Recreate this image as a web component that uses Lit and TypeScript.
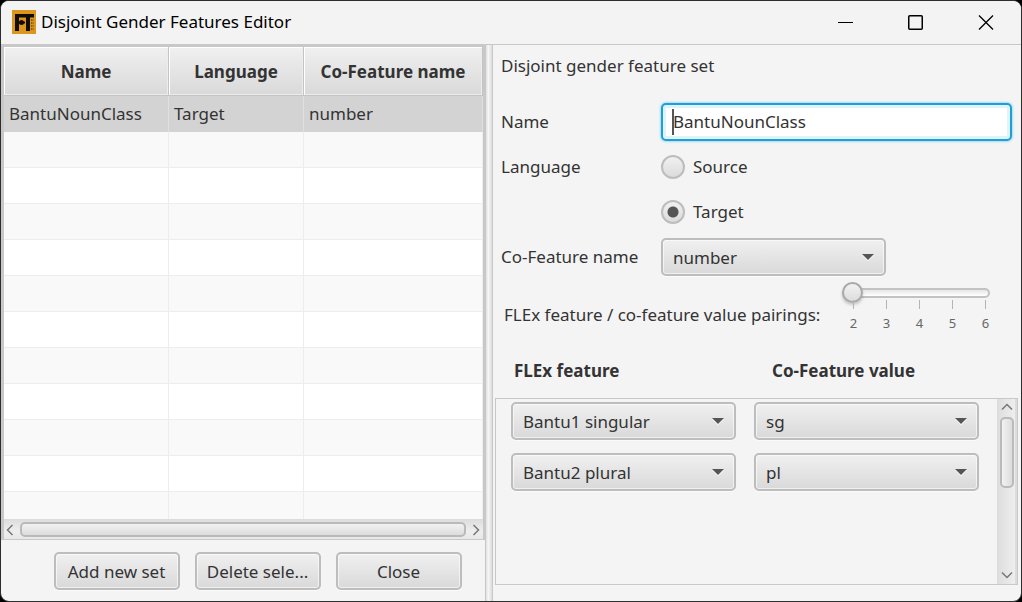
import { LitElement, html, css, svg } from "lit";
import { customElement, property, state } from "lit/decorators.js";

interface FeatureSet {
  name: string;
  language: string;
  coFeature: string;
}

interface Pairing {
  feature: string;
  value: string;
}

const controlFace = css`
  .face {
    box-sizing: border-box;
    height: 38px;
    padding-top: 2px;
    border: 2px solid #bdbdbd;
    border-radius: 5px;
    background: linear-gradient(#f0f0f0, #d9d9d9);
    box-shadow: inset 0 0 0 1px rgba(255, 255, 255, 0.6), 0 1px 0 #fbfbfb;
    color: #333;
    font: inherit;
  }
`;

@customElement("combo-box")
export class ComboBox extends LitElement {
  @property() value = "";
  @property() label = "";

  static styles = [
    controlFace,
    css`
      :host {
        display: grid;
        min-width: 0;
      }
      .face {
        appearance: none;
        width: 100%;
        padding-left: 10px;
        padding-right: 40px;
        outline: none;
      }
      .face,
      .arrow {
        grid-area: 1 / 1;
      }
      .arrow {
        place-self: center end;
        margin-right: 12px;
        pointer-events: none;
      }
    `,
  ];

  render() {
    return html`
      <select class="face" aria-label=${this.label}>
        <option>${this.value}</option>
      </select>
      <svg class="arrow" width="12" height="8" viewBox="0 0 12 8" aria-hidden="true">
        <path d="M0 2h12L6 8z" fill="#fff" />
        <path d="M0 1h12L6 7z" fill="#555" />
      </svg>
    `;
  }
}

@customElement("app-root")
export class AppRoot extends LitElement {
  @state() private sets: FeatureSet[] = [
    { name: "BantuNounClass", language: "Target", coFeature: "number" },
  ];
  @state() private language = "Target";
  @state() private pairingCount = 2;
  @state() private pairings: Pairing[] = [
    { feature: "Bantu1 singular", value: "sg" },
    { feature: "Bantu2 plural", value: "pl" },
  ];

  static styles = [
    controlFace,
    css`
      :host {
        display: block;
        height: 100vh;
        background: #000;
        color: #333;
        font: 17px/24px "Noto Sans", "Open Sans", sans-serif;
      }
      * {
        box-sizing: border-box;
      }
      .window {
        height: 100%;
        display: flex;
        flex-direction: column;
        border: 1px solid #2e2c2e;
        border-radius: 9px;
        background: #f4f4f4;
        overflow: hidden;
      }

      .titlebar {
        flex: none;
        display: flex;
        align-items: center;
        height: 43px;
        padding-left: 11px;
        background: #f3f3f3;
        color: #000;
      }
      .logo {
        margin-bottom: 2px;
      }
      .title {
        flex: 1;
        margin: 0 0 2px 5px;
        font-size: 17px;
        font-weight: 400;
      }
      .winbtn {
        display: grid;
        place-items: center;
        width: 70px;
        height: 43px;
        padding: 0 0 2px;
        border: 0;
        background: none;
      }

      .split {
        flex: 1;
        min-height: 0;
        display: grid;
        grid-template-columns: minmax(0, 484fr) 8px minmax(0, 528fr);
        border-top: 1px solid #c8c8c8;
      }
      .divider {
        border: 1px solid #c8c8c8;
        border-width: 0 1px;
        background: linear-gradient(90deg, #e0e0e0, #f6f6f6 40%, #dcdcdc);
      }
      .left {
        min-height: 0;
        display: flex;
        flex-direction: column;
      }

      .tableframe {
        flex: 1;
        min-height: 0;
        display: flex;
        flex-direction: column;
        border: solid #c8c8c8;
        border-width: 2px 2px 1px 3px;
      }
      .rows {
        flex: 1;
        min-height: 0;
        overflow: hidden;
        background: #f9f9f9;
      }
      table {
        width: 100%;
        table-layout: fixed;
        border-collapse: separate;
        border-spacing: 0;
      }
      .c-name {
        width: 165px;
      }
      .c-lang {
        width: 135px;
      }
      th {
        height: 49px;
        padding: 2px 0 0;
        border: solid #c4c4c4;
        border-width: 0 1px 1px 0;
        background: linear-gradient(#f0f0f0, #d9d9d9);
        box-shadow: inset 1px 1px 0 #fff, inset -1px -1px 0 #ececec;
        font-weight: 700;
      }
      td {
        height: 36px;
        padding: 0 5px;
        border: solid #ededed;
        border-width: 0 1px 1px 0;
        background: #f9f9f9;
      }
      tr:nth-child(odd) td {
        background: #fff;
      }
      tr.selected td {
        border-bottom-color: #d3d3d3;
        border-right-color: #e0e0e0;
        background: #d3d3d3;
      }

      .hbar {
        flex: none;
        display: flex;
        align-items: center;
        gap: 6px;
        height: 20px;
        padding: 0 3px 0 2px;
        border-top: 1px solid #dcdcdc;
        background: linear-gradient(#dedede, #eee 60%, #e8e8e8);
      }
      .hthumb {
        flex: 1;
        height: 15px;
        border: 2px solid #bababa;
        border-radius: 5px;
        background: linear-gradient(#f2f2f2, #dcdcdc);
      }

      .actions {
        flex: none;
        display: flex;
        justify-content: center;
        gap: 15px;
        padding: 12px 0 11px 29px;
      }
      .action {
        width: 126px;
        padding-left: 8px;
        padding-right: 8px;
        white-space: nowrap;
      }

      .right {
        min-width: 0;
        min-height: 0;
        display: flex;
        flex-direction: column;
        padding: 0 3px 16px 2px;
      }
      .caption {
        margin: 9px 6px 11px;
        font-size: 17px;
        font-weight: 400;
      }
      .form {
        display: grid;
        grid-template-columns: 160px minmax(0, 1fr);
        grid-auto-rows: 45px;
        align-items: center;
        margin-top: 10px;
        padding: 0 6px 0 6px;
      }
      .field {
        display: grid;
        align-items: center;
      }
      .field > * {
        grid-area: 1 / 1;
      }
      .text {
        width: 100%;
        height: 38px;
        padding: 0 10px;
        border: 2px solid #1ba1d4;
        border-radius: 5px;
        outline: none;
        background: #fff;
        box-shadow: inset 0 0 0 3px #e0f2fa, 0 0 2px 1px #a8dcf0;
        color: #333;
        font: inherit;
      }
      .caret {
        width: 2px;
        height: 26px;
        margin-left: 11px;
        background: #555;
      }
      .radio {
        grid-column: 2;
        display: flex;
        align-items: center;
        gap: 8px;
      }
      .radio input {
        appearance: none;
        width: 24px;
        height: 24px;
        margin: 0;
        border: 2px solid #bdbdbd;
        border-radius: 50%;
        background: linear-gradient(#f1f1f1, #dbdbdb);
      }
      .radio input:checked {
        background: radial-gradient(circle, #555 5px, transparent 6px),
          linear-gradient(#f1f1f1, #dbdbdb);
      }
      .combo {
        width: 225px;
      }

      .counter {
        display: flex;
        align-items: center;
        gap: 22px;
        height: 72px;
        padding-left: 9px;
      }
      .slider {
        width: 148px;
        padding-bottom: 16px;
      }
      .range {
        display: block;
        appearance: none;
        width: 100%;
        height: 22px;
        margin: 0;
        background: none;
      }
      .range::-webkit-slider-runnable-track {
        height: 10px;
        border: 2px solid #c2c2c2;
        border-radius: 5px;
        background: linear-gradient(#e6e6e6, #fff);
      }
      .range::-webkit-slider-thumb {
        appearance: none;
        width: 21px;
        height: 21px;
        margin: -8px 0 0 -2px;
        border: 2px solid #a9a9a9;
        border-radius: 50%;
        background: linear-gradient(#f2f2f2, #dcdcdc);
        box-shadow: 0 2px 3px rgba(0, 0, 0, 0.2);
      }
      .ticks {
        display: flex;
        justify-content: space-between;
        margin: -4px 0 0 6px;
        color: #666;
        font-size: 13px;
        line-height: 18px;
      }
      .tick {
        display: flex;
        flex-direction: column;
        align-items: center;
        gap: 5px;
        width: 10px;
      }
      .tick::before {
        content: "";
        width: 1px;
        height: 9px;
        background: #b4b4b4;
      }

      .heads {
        display: grid;
        grid-template-columns: 258px minmax(0, 1fr);
        margin: 8px 0 15px;
        padding-left: 19px;
        font-weight: 700;
      }
      .scroller {
        flex: 1;
        min-height: 0;
        display: flex;
        border: 1px solid #c8c8c8;
      }
      .pairs {
        flex: 1;
        display: grid;
        grid-template-columns: 225px 225px;
        grid-auto-rows: 38px;
        gap: 13px 18px;
        padding: 3px 15px;
        overflow: hidden;
      }
      .vbar {
        flex: none;
        display: flex;
        flex-direction: column;
        align-items: center;
        gap: 6px;
        width: 20px;
        padding: 4px 0 5px;
        border: solid #dcdcdc;
        border-width: 0 2px 0 1px;
        background: linear-gradient(90deg, #dedede, #eee);
      }
      .vthumb {
        width: 14px;
        height: 71px;
        border: 2px solid #bababa;
        border-radius: 5px;
        background: linear-gradient(90deg, #f2f2f2, #dcdcdc);
      }
      .vgap {
        flex: 1;
      }
    `,
  ];

  private chevron(d: string, w: number, h: number) {
    return html`<svg width=${w} height=${h} viewBox="0 0 ${w} ${h}" aria-hidden="true">
      <path d=${d} fill="none" stroke="#777" stroke-width="1.5" />
    </svg>`;
  }

  private logo() {
    return html`<svg
      class="logo"
      width="24"
      height="24"
      viewBox="0 0 24 24"
      role="img"
      aria-label="FLExTrans"
    >
      <rect width="24" height="24" fill="#dc961e" />
      <path d="M3 4h19v3.500h-4V21h-4V7.500H7V21H3z" fill="#120c02" />
      <path d="M3 12.500h10" stroke="#120c02" stroke-width="2" />
      <ellipse cx="9.500" cy="12.500" rx="2.500" ry="2.500" fill="#120c02" />
      <path d="M19.500 9v11M21 9v11" stroke="#8a5c10" stroke-dasharray="2 1" />
    </svg>`;
  }

  private winButton(label: string, shape: unknown) {
    return html`<button class="winbtn" aria-label=${label}>
      <svg width="16" height="16" viewBox="0 0 16 16" fill="none" stroke="#000">${shape}</svg>
    </button>`;
  }

  render() {
    const blanks = Array.from({ length: 11 });
    return html`
      <div class="window">
        <header class="titlebar">
          ${this.logo()}
          <h1 class="title">Disjoint Gender Features Editor</h1>
          ${this.winButton("Minimize", svg`<path d="M0 8.500h15" />`)}
          ${this.winButton("Maximize", svg`<rect x="0.750" y="1.750" width="13.500" height="13.500" rx="1" stroke-width="1.500" />`)}
          ${this.winButton("Close window", svg`<path d="M1 1.500l14 14M15 1.500L1 15.500" stroke-width="1.300" />`)}
        </header>
        <main class="split">
          <section class="left">
            <div class="tableframe">
              <div class="rows">
                <table>
                  <colgroup>
                    <col class="c-name" />
                    <col class="c-lang" />
                    <col />
                  </colgroup>
                  <thead>
                    <tr><th>Name</th><th>Language</th><th>Co-Feature name</th></tr>
                  </thead>
                  <tbody>
                    ${this.sets.map(
                      (s) => html`<tr class="selected">
                        <td>${s.name}</td><td>${s.language}</td><td>${s.coFeature}</td>
                      </tr>`
                    )}
                    ${blanks.map(() => html`<tr><td></td><td></td><td></td></tr>`)}
                  </tbody>
                </table>
              </div>
              <div class="hbar">
                ${this.chevron("M6.500 1L1.500 6l5 5", 8, 12)}
                <div class="hthumb"></div>
                ${this.chevron("M1.500 1l5 5-5 5", 8, 12)}
              </div>
            </div>
            <div class="actions">
              <button class="face action">Add new set</button>
              <button class="face action">Delete sele...</button>
              <button class="face action">Close</button>
            </div>
          </section>
          <div class="divider"></div>
          <section class="right">
            <h2 class="caption">Disjoint gender feature set</h2>
            <div class="form">
              <label for="set-name">Name</label>
              <div class="field">
                <input id="set-name" class="text" type="text" .value=${"BantuNounClass"} />
                <span class="caret"></span>
              </div>
              <span>Language</span>
              ${["Source", "Target"].map(
                (l) => html`<label class="radio">
                  <input
                    type="radio"
                    name="language"
                    .checked=${this.language === l}
                    @change=${() => (this.language = l)}
                  />${l}
                </label>`
              )}
              <span>Co-Feature name</span>
              <combo-box class="combo" label="Co-Feature name" value="number"></combo-box>
            </div>
            <div class="counter">
              <label for="pair-count">FLEx feature / co-feature value pairings:</label>
              <div class="slider">
                <input
                  id="pair-count"
                  class="range"
                  type="range"
                  min="2"
                  max="6"
                  .value=${String(this.pairingCount)}
                />
                <div class="ticks">
                  ${[2, 3, 4, 5, 6].map((n) => html`<span class="tick">${n}</span>`)}
                </div>
              </div>
            </div>
            <div class="heads"><span>FLEx feature</span><span>Co-Feature value</span></div>
            <div class="scroller">
              <div class="pairs">
                ${this.pairings.map(
                  (p) => html`<combo-box label="FLEx feature" value=${p.feature}></combo-box>
                    <combo-box label="Co-Feature value" value=${p.value}></combo-box>`
                )}
              </div>
              <div class="vbar">
                ${this.chevron("M1 6.500L6 1.500l5 5", 12, 8)}
                <div class="vthumb"></div>
                <div class="vgap"></div>
                ${this.chevron("M1 1.500l5 5 5-5", 12, 8)}
              </div>
            </div>
          </section>
        </main>
      </div>
    `;
  }
}
